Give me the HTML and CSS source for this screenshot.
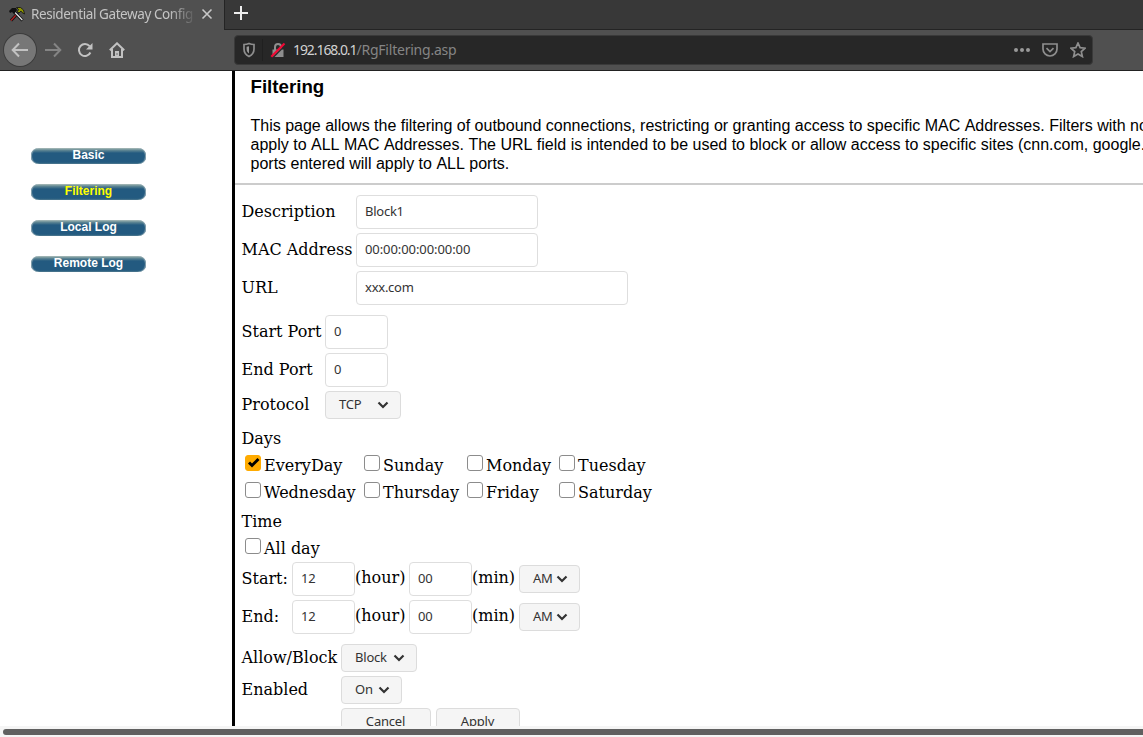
FILE: index.html
```html
<!DOCTYPE html>
<html lang="en">
<head>
    <meta charset="UTF-8">
    <title>Residential Gateway Configuration</title>
    <link rel="stylesheet" href="styles.css">
</head>
<body>
    <div class="tab-strip">
        <div class="tab">
            <svg class="favicon" width="16" height="16" viewBox="0 0 16 16">
                <path d="M2 14.500L9 7" stroke="#111" stroke-width="3"/>
                <path d="M2 14.500L7 9" stroke="#b32020" stroke-width="1.400"/>
                <path d="M5.500 6l8 8.500" stroke="#111" stroke-width="3"/>
                <path d="M6 6.500l7.300 7.500" stroke="#e8e8e8" stroke-width="1.200"/>
                <path d="M0 5l3-3h4l1 2-3 4-2-2-2 1z" fill="#111"/>
                <path d="M7.500 1.500h4l3 2.500 1 4-2.500-1.500-1-1.500-2 2-1.500-1.500 1-2z" fill="#8c9400" stroke="#111" stroke-width=".8"/>
            </svg>
            <span class="tab-title">Residential Gateway Config</span>
            <svg class="tab-close" width="12" height="12" viewBox="0 0 12 12"><path d="M1.500 1.500l9 9M10.500 1.500l-9 9"/></svg>
        </div>
        <div class="new-tab">
            <svg width="14" height="14" viewBox="0 0 14 14"><path d="M7 0v14M0 7h14"/></svg>
        </div>
    </div>

    <div class="toolbar">
        <div class="nav-buttons">
            <span class="back">
                <svg width="18" height="16" viewBox="0 0 18 16"><path d="M17 8H2M8 1.500L1.700 8 8 14.500"/></svg>
            </span>
            <svg class="forward" width="18" height="16" viewBox="0 0 18 16"><path d="M1 8h15M10 1.500L16.300 8 10 14.500"/></svg>
            <svg class="reload" width="16" height="16" viewBox="0 0 16 16"><path d="M13.400 10.500A6 6 0 1 1 12.600 4.200"/><path class="solid" d="M15.500 1v6.500H9z"/></svg>
            <svg class="home" width="16" height="16" viewBox="0 0 16 16"><path d="M.8 8.200L8 1.300l7.200 6.900M3 7v8h10V7"/><path class="solid" d="M6 9h4v6H6z"/><path class="knob" d="M8 11.300v1.400"/></svg>
        </div>
        <div class="url-bar">
            <svg class="shield" width="14" height="16" viewBox="0 0 14 16"><path d="M7 1.500c2 .9 3.600 1 5 1v4.500c0 3.500-1.700 5.800-5 7.500-3.300-1.700-5-4-5-7.500V2.500c1.400 0 3-.1 5-1z"/><path class="solid" d="M7 4.300v7.200C5.200 10.300 4.600 8.700 4.600 6.700V4.800z"/></svg>
            <span class="url-divider"></span>
            <svg class="lock" width="16" height="16" viewBox="0 0 16 16"><path class="shackle" d="M5 8V5a3 3 0 0 1 6 0v3"/><path class="lock-body" d="M2.500 7.500h11V15h-11z"/><path class="gap" d="M2.500 16L15.500 3"/><path class="slash" d="M1.300 14.700L14.500 1.500"/></svg>
            <span class="url"><span class="host">192.168.0.1</span><span class="path">/RgFiltering.asp</span></span>
            <div class="url-actions">
                <svg width="16" height="16" viewBox="0 0 16 16"><g class="solid"><circle cx="2" cy="8" r="2"/><circle cx="8" cy="8" r="2"/><circle cx="14" cy="8" r="2"/></g></svg>
                <svg width="16" height="16" viewBox="0 0 16 16"><path d="M1 2h14v5a7 7 0 0 1-14 0z"/><path d="M4.500 6.200L8 9.500l3.500-3.300"/></svg>
                <svg width="16" height="16" viewBox="0 0 16 16"><path d="M8 1l2.100 4.700 5 .5-3.800 3.400 1.100 5L8 12.100l-4.400 2.500 1.100-5L.9 6.200l5-.5z"/></svg>
            </div>
        </div>
    </div>

    <div class="page">
        <ul class="menu">
            <li>Basic</li>
            <li class="active">Filtering</li>
            <li>Local Log</li>
            <li>Remote Log</li>
        </ul>

        <div class="content">
            <div class="intro">
                <h1>Filtering</h1>
                <p>This page allows the filtering of outbound connections, restricting or granting access to specific MAC Addresses. Filters with no<br>
                apply to ALL MAC Addresses. The URL field is intended to be used to block or allow access to specific sites (cnn.com, google.<br>
                ports entered will apply to ALL ports.</p>
            </div>

            <form class="filter-form">
                <div class="fields target">
                    <label>Description</label>
                    <input class="medium" type="text" value="Block1">
                    <label>MAC Address</label>
                    <input class="medium mac" type="text" value="00:00:00:00:00:00">
                    <label>URL</label>
                    <input class="wide" type="text" value="xxx.com">
                </div>

                <div class="fields ports">
                    <label>Start Port</label>
                    <input class="short" type="text" value="0">
                    <label>End Port</label>
                    <input class="short" type="text" value="0">
                    <label>Protocol</label>
                    <div class="select protocol">TCP <svg width="12" height="8" viewBox="0 0 12 8"><path d="M1.500 1.500L6 6l4.500-4.500"/></svg></div>
                </div>

                <div class="heading">Days</div>
                <div class="days">
                    <label><input type="checkbox" class="checked"><svg class="tick" width="16" height="16" viewBox="0 0 16 16"><path d="M4 7.500l3 3 6.500-6.500"/></svg>EveryDay</label>
                    <label><input type="checkbox">Sunday</label>
                    <label><input type="checkbox">Monday</label>
                    <label><input type="checkbox">Tuesday</label>
                    <label><input type="checkbox">Wednesday</label>
                    <label><input type="checkbox">Thursday</label>
                    <label><input type="checkbox">Friday</label>
                    <label><input type="checkbox">Saturday</label>
                </div>

                <div class="heading time-heading">Time</div>
                <div class="all-day"><label><input type="checkbox">All day</label></div>
                <div class="times">
                    <label>Start:</label>
                    <input class="short" type="text" value="12">
                    <span>(hour)</span>
                    <input class="short" type="text" value="00">
                    <span>(min)</span>
                    <div class="select">AM <svg width="12" height="8" viewBox="0 0 12 8"><path d="M1.500 1.500L6 6l4.500-4.500"/></svg></div>
                    <label>End:</label>
                    <input class="short" type="text" value="12">
                    <span>(hour)</span>
                    <input class="short" type="text" value="00">
                    <span>(min)</span>
                    <div class="select">AM <svg width="12" height="8" viewBox="0 0 12 8"><path d="M1.500 1.500L6 6l4.500-4.500"/></svg></div>
                </div>

                <div class="fields action">
                    <label>Allow/Block</label>
                    <div class="select block">Block <svg width="12" height="8" viewBox="0 0 12 8"><path d="M1.500 1.500L6 6l4.500-4.500"/></svg></div>
                    <label>Enabled</label>
                    <div class="select enabled">On <svg width="12" height="8" viewBox="0 0 12 8"><path d="M1.500 1.500L6 6l4.500-4.500"/></svg></div>
                    <span></span>
                    <div class="buttons">
                        <button class="cancel" type="button">Cancel</button>
                        <button class="apply" type="button">Apply</button>
                    </div>
                </div>
            </form>
        </div>
    </div>

    <div class="scrollbar"><div class="thumb"></div></div>
</body>
</html>
```
FILE: styles.css
```css
* {
    box-sizing: border-box;
}

body {
    margin: 0;
    height: 737px;
    overflow: hidden;
    display: flex;
    flex-direction: column;
    background: white;
    color: #000;
    font-family: "DejaVu Serif", serif;
    font-size: 16px;
}

svg {
    fill: none;
    flex: none;
    display: block;
}

/* Browser chrome */
.tab-strip {
    height: 30px;
    flex: none;
    display: flex;
    background: #383838;
    font-family: "Noto Sans", sans-serif;
}

.tab {
    width: 224px;
    padding: 0 11px 2px 9px;
    display: flex;
    align-items: center;
    background: #505050;
}

.tab-title {
    width: 164px;
    margin: -1px 6px 0;
    overflow: hidden;
    white-space: nowrap;
    font-size: 13.5px;
    letter-spacing: -0.42px;
    color: #c4c4c4;
    mask-image: linear-gradient(to right, #000 138px, transparent 166px);
}

.tab-close {
    stroke: #c8c8c8;
    stroke-width: 1.6;
}

.new-tab {
    flex: 1;
    padding: 6px 0 0 9px;
    border-left: 1px solid #242424;
    border-bottom: 1px solid #242424;
    stroke: #eee;
    stroke-width: 2;
}

.toolbar {
    height: 41px;
    flex: none;
    display: flex;
    align-items: center;
    background: #505050;
    border-bottom: 1px solid #222;
    font-family: "Noto Sans", sans-serif;
}

.nav-buttons {
    width: 234px;
    padding-left: 4px;
    display: flex;
    align-items: center;
    stroke: #c2c2c2;
    stroke-width: 2;
}

.back {
    width: 32px;
    height: 32px;
    display: flex;
    align-items: center;
    justify-content: center;
    border-radius: 50%;
    background: #777;
    box-shadow: 0 0 0 1px #3c3c3c;
}

.forward {
    margin-left: 8px;
    stroke: #858585;
}

.reload {
    margin-left: 15px;
}

.home {
    margin-left: 16px;
}

.nav-buttons .solid {
    fill: #c2c2c2;
    stroke: none;
}

.nav-buttons .knob {
    stroke: #505050;
    stroke-width: 1;
}

.url-bar {
    width: 859px;
    height: 30px;
    padding: 0 6px 0 7px;
    display: flex;
    align-items: center;
    background: #272727;
    border: 1px solid #3a3a3a;
    border-radius: 4px;
}

.shield,
.url-actions {
    stroke: #8e8e8e;
    stroke-width: 1.7;
}

.shield .solid,
.url-actions .solid {
    fill: #999;
    stroke: none;
}

.url-divider {
    width: 1px;
    height: 22px;
    margin: 0 7px 0 6px;
    background: #202020;
}

.lock .shackle {
    stroke: #8e8e8e;
    stroke-width: 2;
}

.lock .lock-body {
    fill: #8e8e8e;
}

.lock .gap {
    stroke: #272727;
    stroke-width: 1.5;
}

.lock .slash {
    stroke: #f00834;
    stroke-width: 2.2;
}

.url {
    flex: 1;
    margin: -2px 0 0 7px;
    font-size: 14px;
    color: #858585;
}

.url .host {
    color: #d2d2d2;
    letter-spacing: -1.08px;
}

.url .path {
    letter-spacing: -0.22px;
}

.url-actions {
    display: flex;
    gap: 12px;
}

/* Router page */
.page {
    flex: 1;
    min-height: 0;
    display: flex;
    overflow: hidden;
}

.menu {
    width: 232px;
    flex: none;
    margin: 0;
    padding: 77px 0 0 31px;
    list-style: none;
}

.menu li {
    width: 115px;
    height: 16px;
    margin-bottom: 20px;
    border-radius: 8px / 7px;
    background: linear-gradient(#b4c4be 0, #648a95 2px, #235a80 5px, #235a80 14px, #3a6b85 16px);
    box-shadow: inset 1px 0 1px #8aa5b0, inset -1px 0 1px #8aa5b0;
    color: #fff;
    font: bold 12px/15px "Liberation Sans", Arial, sans-serif;
    text-align: center;
}

.menu .active {
    color: #ff0;
}

.content {
    flex: 1;
    min-width: 0;
    border-left: 3px solid #000;
    overflow: hidden;
}

.intro {
    height: 114px;
    padding: 5px 0 0 15.500px;
    border-bottom: 2px solid #ccc;
    font-family: "Liberation Sans", Arial, sans-serif;
}

.intro h1 {
    margin: 0;
    font-size: 18.720px;
    line-height: 22px;
}

.intro p {
    margin: 18px 0 0;
    line-height: 19px;
    white-space: nowrap;
    font-kerning: none;
}

.filter-form {
    padding: 10px 0 0 6.500px;
}

.fields {
    display: grid;
    row-gap: 4px;
    align-items: center;
}

.target {
    grid-template-columns: 114.500px auto;
}

.ports {
    margin-top: 10px;
    grid-template-columns: 83.500px auto;
}

.action {
    margin-top: 10px;
    grid-template-columns: 99.500px auto;
}

.fields label,
.times label {
    line-height: 20px;
    padding-bottom: 1px;
}

input[type="text"] {
    height: 34px;
    margin: 0;
    padding: 0 8px 2px;
    border: 1px solid #dedede;
    border-radius: 4px;
    background: #fff;
    color: #333;
    font: 13px "Noto Sans", sans-serif;
    letter-spacing: -0.25px;
}

input.mac {
    letter-spacing: -0.08px;
}

.medium {
    width: 182px;
}

.wide {
    width: 272px;
}

.short {
    width: 63px;
}

.select,
button {
    height: 28px;
    padding: 0 11px 2px 13px;
    display: flex;
    align-items: center;
    justify-content: space-between;
    border: 1px solid #dcdcdc;
    border-radius: 4px;
    background: #f5f5f5;
    color: #333;
    font: 13px "Noto Sans", sans-serif;
    letter-spacing: -0.2px;
}

.select svg {
    margin-top: 2px;
    stroke: #333;
    stroke-width: 2.2;
}

.protocol,
.block {
    width: 76px;
}

.enabled {
    width: 61px;
}

.heading {
    margin-top: 10px;
    line-height: 20px;
}

.days {
    margin-top: 3px;
    padding-left: 3.500px;
    display: grid;
    grid-template-columns: 119px 103px 92px auto;
    grid-auto-rows: 27px;
}

.days label,
.all-day label {
    position: relative;
    display: flex;
    line-height: 27px;
}

input[type="checkbox"] {
    appearance: none;
    width: 16px;
    height: 16px;
    margin: 3px 3px 0 0;
    border: 1px solid #8c8c8c;
    border-radius: 3px;
    background: #fff;
}

input.checked {
    border-color: #ffab00;
    background: #ffab00;
}

/* sits over the checked box */
.tick {
    position: absolute;
    left: 0;
    top: 3px;
    stroke: #000;
    stroke-width: 3;
}

.time-heading {
    margin-top: 6px;
}

.all-day {
    height: 30px;
    padding: 3px 0 0 3.500px;
}

.times {
    display: grid;
    grid-template-columns: 50.500px 63px 54px 63px 47px 61px;
    row-gap: 4px;
    align-items: center;
}

.times span {
    line-height: 20px;
    padding-bottom: 3px;
}

.buttons {
    display: flex;
    gap: 5px;
}

button {
    padding: 0 1px 3px 0;
    justify-content: center;
}

.cancel {
    width: 90px;
}

.apply {
    width: 84px;
}

.scrollbar {
    height: 11px;
    flex: none;
    padding: 3px 0 2px 3px;
    background: #f5f5f5;
}

.thumb {
    height: 6px;
    border-radius: 3px 0 0 3px;
    background: #606060;
}
```
